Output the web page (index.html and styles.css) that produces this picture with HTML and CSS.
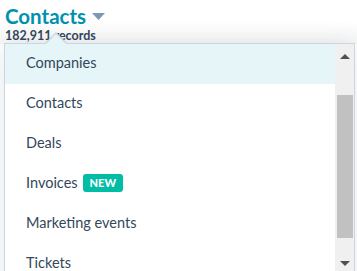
FILE: index.html
```html
<!DOCTYPE html>
<html lang="en">
<head>
  <meta charset="UTF-8">
  <title>Contacts</title>
  <link rel="stylesheet" href="styles.css">
</head>
<body>
  <!-- Page header with object switcher -->
  <header class="page-head">
    <h1 class="page-title">
      Contacts
      <svg class="title-caret" width="13" height="8" viewBox="0 0 13 8"><path d="M0 0 L13 0 L6.5 7 Z" fill="#7c98b6"/></svg>
    </h1>
    <div class="record-count">182,911 records</div>
  </header>

  <!-- Object dropdown -->
  <div class="popover">
    <ul class="menu-list">
      <li class="menu-item active">Companies</li>
      <li class="menu-item">Contacts</li>
      <li class="menu-item">Deals</li>
      <li class="menu-item">Invoices <span class="badge">NEW</span></li>
      <li class="menu-item">Marketing events</li>
      <li class="menu-item">Tickets</li>
    </ul>
    <div class="scrollbar">
      <div class="scroll-arrow up"></div>
      <div class="scroll-track">
        <div class="scroll-thumb"></div>
      </div>
      <div class="scroll-arrow down"></div>
    </div>
  </div>
</body>
</html>
```

FILE: styles.css
```css
:root {
  --teal: #0091ae;
  --text: #33475b;
  --border: #cbd6e2;
  --hover: #e5f5f8;
  --badge: #00bda5;
}

* {
  margin: 0;
  padding: 0;
  box-sizing: border-box;
  font-family: Lato, 'Noto Sans', sans-serif;
}

body {
  width: 357px;
  height: 271px;
  overflow: hidden;
  position: relative;
  color: var(--text);
  background: linear-gradient(180deg, #ffffff 0px, #ffffff 22px, #f6f6f6 44px, #ffffff 44px);
}

.page-head {
  padding: 4px 0 0 5px;
}

.page-title {
  display: flex;
  align-items: center;
  gap: 6px;
  font-size: 20.5px;
  font-weight: 700;
  line-height: 25px;
  color: var(--teal);
}

.title-caret {
  margin-top: 1px;
}

.record-count {
  font-size: 12.5px;
  font-weight: 700;
  line-height: 14px;
}

.popover {
  position: absolute;
  left: 4px;
  top: 43px;
  width: 351px;
  height: 260px;
  background: #fff;
  border: 1px solid var(--border);
  box-shadow: 0 1px 24px rgba(45, 62, 80, 0.12);
  display: flex;
}

/* pointer arrow above the dropdown */
.popover::before,
.popover::after {
  content: '';
  position: absolute;
  left: 40px;
  width: 0;
  height: 0;
  border-left: 11px solid transparent;
  border-right: 11px solid transparent;
}

.popover::before {
  top: -12px;
  border-bottom: 11px solid var(--border);
}

.popover::after {
  top: -10px;
  border-bottom: 11px solid var(--hover);
}

.menu-list {
  list-style: none;
  flex: 1;
}

.menu-item {
  height: 40px;
  display: flex;
  align-items: center;
  gap: 5px;
  padding: 0 0 3px 21px;
  font-size: 14.5px;
}

.menu-item.active {
  background: var(--hover);
}

.badge {
  background: var(--badge);
  color: #fff;
  font-size: 11px;
  font-weight: 900;
  padding: 2px 7px;
  border-radius: 3px;
  line-height: 14px;
}

.scrollbar {
  width: 19px;
  background: #f0f0f0;
  display: flex;
  flex-direction: column;
}

.scroll-arrow {
  height: 17px;
  display: flex;
  justify-content: center;
  align-items: center;
}

.scroll-arrow.up::before,
.scroll-arrow.down::before {
  content: '';
  border-left: 5px solid transparent;
  border-right: 5px solid transparent;
}

.scroll-arrow.up {
  margin-top: 4px;
}

.scroll-arrow.up::before {
  border-bottom: 5px solid #505050;
}

.scroll-arrow.down::before {
  border-top: 5px solid #505050;
}

.scroll-track {
  height: 190px;
  padding: 30px 1px 0 2px;
}

.scroll-thumb {
  height: 143px;
  background: #c1c1c1;
}
```
